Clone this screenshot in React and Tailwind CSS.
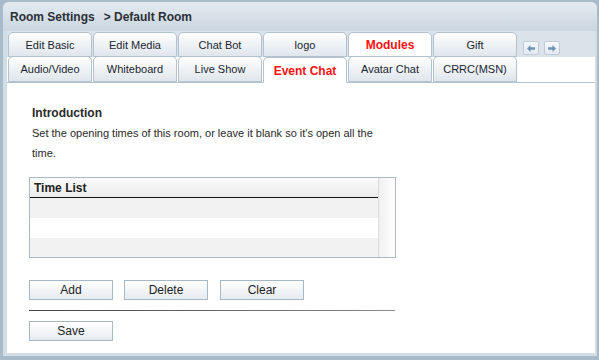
import React from "react";

const tabBase =
  "w-[84px] mr-[1px] rounded-t-[5px] border border-[#b2c2cf] flex items-center justify-center text-[11px]";

function Tab({ label, active, row2 }) {
  if (active) {
    return (
      <div
        className={
          row2
            ? "w-[84px] h-[26px] mr-[1px] rounded-t-[5px] border border-[#b2c2cf] border-b-white bg-white -mb-[1px] flex items-center justify-center text-[12px] font-bold text-[#ff0f0f] pt-[1px]"
            : "w-[84px] h-[25px] mr-[1px] rounded-t-[5px] border border-[#b2c2cf] bg-white flex items-center justify-center text-[12px] font-bold text-[#ff0f0f] pt-[1px]"
        }
      >
        {label}
      </div>
    );
  }
  return (
    <div
      className={
        row2
          ? tabBase + " h-[26px] bg-linear-to-b from-white to-[#dfe6ec] text-[#1b2530] pt-[1px]"
          : tabBase + " h-[25px] bg-linear-to-b from-white to-[#dfe6ec] text-[#1b2530] pt-[1px]"
      }
    >
      {label}
    </div>
  );
}

function Arrow({ dir }) {
  return (
    <div className="w-[16px] h-[14px] border border-[#bfccd8] bg-linear-to-b from-[#f7f9fb] to-[#e3e9ef] rounded-[2px] flex items-center justify-center">
      <svg width="8" height="7" viewBox="0 0 8 7">
        {dir === "left" ? (
          <path d="M0 3.5 L3.5 0 L3.5 2.2 L8 2.2 L8 4.8 L3.5 4.8 L3.5 7 Z" fill="#6d93b6" />
        ) : (
          <path d="M8 3.5 L4.5 0 L4.5 2.2 L0 2.2 L0 4.8 L4.5 4.8 L4.5 7 Z" fill="#6d93b6" />
        )}
      </svg>
    </div>
  );
}

function Btn({ label, cls }) {
  return (
    <button
      className={
        "w-[84px] h-[20px] border border-[#a6b7c7] bg-linear-to-b from-white to-[#e6ebf0] text-[12px] text-[#222] flex items-center justify-center " +
        (cls || "")
      }
    >
      {label}
    </button>
  );
}

export default function App() {
  return (
    <div className="w-[599px] h-[360px] bg-[#a8bbcb] pt-[2px] pl-[3px] pr-[2px] pb-[4px] font-['Liberation_Sans',Arial,sans-serif] overflow-hidden">
      <div className="h-full rounded-t-[6px] bg-[#d3dde6] flex flex-col pl-[4px] pr-[2px] pb-[3px]">
        {/* header */}
        <div className="h-[29px] -ml-[4px] -mr-[2px] rounded-t-[6px] bg-linear-to-b from-[#e4eaf0] to-[#cad6e0] flex items-center pl-[7px] pt-[1px] text-[12px] font-bold text-[#2b3036]">
          <span>Room Settings</span>
          <span className="ml-[9px]">&gt; Default Room</span>
        </div>
        {/* tab row 1 */}
        <div className="h-[26px] bg-[#dbe3ea] flex items-end pl-[1px]">
          <Tab label="Edit Basic" />
          <Tab label="Edit Media" />
          <Tab label="Chat Bot" />
          <Tab label="logo" />
          <Tab label="Modules" active />
          <Tab label="Gift" />
          <div className="self-start mt-[10px] ml-[5px] flex gap-[5px]">
            <Arrow dir="left" />
            <Arrow dir="right" />
          </div>
        </div>
        {/* tab row 2 */}
        <div className="h-[26px] bg-white border-b border-[#b2c2cf] flex items-end pl-[1px]">
          <Tab label="Audio/Video" row2 />
          <Tab label="Whiteboard" row2 />
          <Tab label="Live Show" row2 />
          <Tab label="Event Chat" row2 active />
          <Tab label="Avatar Chat" row2 />
          <Tab label="CRRC(MSN)" row2 />
        </div>
        {/* content */}
        <div className="flex-1 bg-white pl-[22px] pt-[20px] text-[#2a2a2a]">
          <div className="pl-[3px] text-[11px] leading-[20px]">
            <div className="font-bold text-[12px]">Introduction</div>
            <div className="w-[350px]">
              Set the opening times of this room, or leave it blank so it's open all the time.
            </div>
          </div>
          {/* table */}
          <div className="mt-[14px] w-[367px] h-[81px] border border-[#a9bac9] flex">
            <div className="flex-1 flex flex-col">
              <div className="h-[20px] bg-linear-to-b from-[#fbfbfb] to-[#ebebeb] border-b border-[#111] flex items-center pl-[4px] text-[12px] font-bold text-[#222]">
                Time List
              </div>
              <div className="h-[20px] bg-[#f2f2f2]" />
              <div className="h-[20px] bg-white" />
              <div className="flex-1 bg-[#f2f2f2]" />
            </div>
            <div className="w-[17px] border-l border-[#dcdcdc] bg-linear-to-r from-[#f0f0f0] to-white" />
          </div>
          {/* buttons */}
          <div className="mt-[22px] flex">
            <Btn label="Add" cls="mr-[11px]" />
            <Btn label="Delete" cls="mr-[12px]" />
            <Btn label="Clear" />
          </div>
          <div className="mt-[10px] w-[366px] h-[1px] bg-linear-to-r from-[#444] to-[#8a8a8a]" />
          <div className="mt-[10px]">
            <Btn label="Save" />
          </div>
        </div>
      </div>
    </div>
  );
}
